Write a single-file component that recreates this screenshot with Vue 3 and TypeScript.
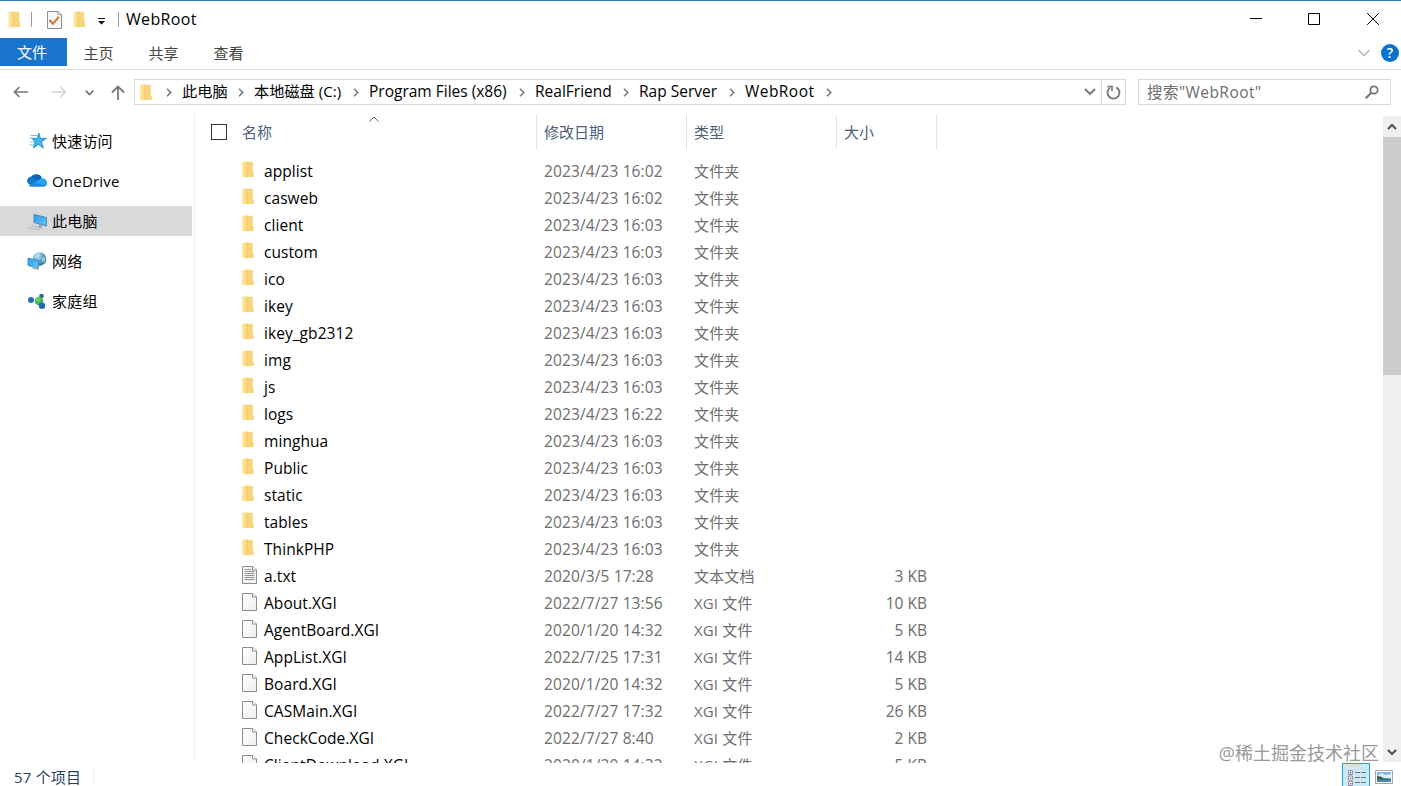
<script setup lang="ts">
interface Entry {
  name: string
  date: string
  kind: 'folder' | 'text' | 'file'
  size: string
}

const folderTimes: [string, string][] = [
  ['applist', '16:02'],
  ['casweb', '16:02'],
  ['client', '16:03'],
  ['custom', '16:03'],
  ['ico', '16:03'],
  ['ikey', '16:03'],
  ['ikey_gb2312', '16:03'],
  ['img', '16:03'],
  ['js', '16:03'],
  ['logs', '16:22'],
  ['minghua', '16:03'],
  ['Public', '16:03'],
  ['static', '16:03'],
  ['tables', '16:03'],
  ['ThinkPHP', '16:03'],
]

const entries: Entry[] = [
  ...folderTimes.map(([name, time]): Entry => ({ name, date: `2023/4/23 ${time}`, kind: 'folder', size: '' })),
  { name: 'a.txt', date: '2020/3/5 17:28', kind: 'text', size: '3 KB' },
  { name: 'About.XGI', date: '2022/7/27 13:56', kind: 'file', size: '10 KB' },
  { name: 'AgentBoard.XGI', date: '2020/1/20 14:32', kind: 'file', size: '5 KB' },
  { name: 'AppList.XGI', date: '2022/7/25 17:31', kind: 'file', size: '14 KB' },
  { name: 'Board.XGI', date: '2020/1/20 14:32', kind: 'file', size: '5 KB' },
  { name: 'CASMain.XGI', date: '2022/7/27 17:32', kind: 'file', size: '26 KB' },
  { name: 'CheckCode.XGI', date: '2022/7/27 8:40', kind: 'file', size: '2 KB' },
  { name: 'ClientDownload.XGI', date: '2020/1/20 14:32', kind: 'file', size: '5 KB' },
]

const kindLabels: Record<Entry['kind'], string> = {
  folder: '文件夹',
  text: '文本文档',
  file: 'XGI 文件',
}

const crumbs = [
  { label: '此电脑', width: 47 },
  { label: '本地磁盘 (C:)', width: 90 },
  { label: 'Program Files (x86)', width: 141 },
  { label: 'RealFriend', width: 79 },
  { label: 'Rap Server', width: 81 },
  { label: 'WebRoot', width: 72 },
]

const places = [
  { label: '快速访问', icon: 'star' },
  { label: 'OneDrive', icon: 'cloud' },
  { label: '此电脑', icon: 'pc' },
  { label: '网络', icon: 'network' },
  { label: '家庭组', icon: 'group' },
]
</script>

<template>
  <div class="window">
    <svg class="defs" width="0" height="0">
      <defs>
        <linearGradient id="fold" x1="0" x2="1" y1="0" y2="0">
          <stop offset="0" stop-color="#ffe8a3" />
          <stop offset="1" stop-color="#fbd575" />
        </linearGradient>
        <linearGradient id="screen" x1="0" x2="1" y1="0" y2="1">
          <stop offset="0" stop-color="#2f9eea" />
          <stop offset="1" stop-color="#62c5fa" />
        </linearGradient>
        <linearGradient id="page" x1="0" x2="1" y1="0" y2="1">
          <stop offset="0" stop-color="#ffffff" />
          <stop offset="1" stop-color="#eeeeee" />
        </linearGradient>
        <radialGradient id="globe" cx=".35" cy=".3" r=".75">
          <stop offset="0" stop-color="#c5e5f2" />
          <stop offset=".55" stop-color="#5ba3c6" />
          <stop offset="1" stop-color="#28709a" />
        </radialGradient>
        <symbol id="folder" viewBox="0 0 12 17">
          <path d="M4 .7h6.8v10.6l1 .8v4H4z" fill="#f7d57c" />
          <path d="M0 1 5.5.3v16.2L0 15.7z" fill="url(#fold)" />
          <path d="M4.400 1h1.100v15H4.400z" fill="#efc45f" opacity=".5" />
        </symbol>
      </defs>
    </svg>

    <header class="titlebar">
      <div class="quick">
        <svg class="folder-q" width="13" height="17"><use href="#folder" /></svg>
        <i class="sep"></i>
        <svg class="check" width="15" height="18" viewBox="0 0 15 18">
          <path d="M.5.5h11l3 3v14H.5z" fill="#f7f8f9" stroke="#8e8e8e" />
          <path d="M11 .5v3.2h3.5" fill="#fff" stroke="#9b9b9b" />
          <path d="m2.5 9 3.4 3.8 6-7" fill="none" stroke="#e06a2c" stroke-width="2" />
        </svg>
        <svg class="folder-q2" width="13" height="17"><use href="#folder" /></svg>
        <svg class="drop" width="7" height="7" viewBox="0 0 7 7"><path d="M0 0h7v1H0zM0 3h7L3.5 6.5z" fill="#111" /></svg>
        <i class="sep last"></i>
        <span class="title">WebRoot</span>
      </div>
      <div class="controls">
        <svg class="min" width="12" height="12" viewBox="0 0 12 12"><path d="M0 5.500h12" stroke="#000" /></svg>
        <svg width="12" height="12" viewBox="0 0 12 12"><path d="M.5.5h11v11H.5z" fill="none" stroke="#000" /></svg>
        <svg width="12" height="12" viewBox="0 0 12 12"><path d="m.2.2 11.6 11.6m0-11.6L.2 11.8" stroke="#000" /></svg>
      </div>
    </header>

    <nav class="ribbon">
      <span class="tab file">文件</span>
      <span class="tab">主页</span>
      <span class="tab">共享</span>
      <span class="tab">查看</span>
      <div class="ribbon-end">
        <svg width="12" height="8" viewBox="0 0 12 8"><path d="m.5 1 5.500 5.500L11.500 1" fill="none" stroke="#b4b4b4" stroke-width="1.400" /></svg>
        <span class="help">?</span>
      </div>
    </nav>

    <div class="address-row">
      <div class="history">
        <svg width="15" height="12" viewBox="0 0 15 12"><path d="M15 6H1.500M6.500 1l-5 5 5 5" fill="none" stroke="#777" stroke-width="1.700" /></svg>
        <svg width="15" height="12" viewBox="0 0 15 12"><path d="M0 6h13.500M8.500 1l5 5-5 5" fill="none" stroke="#d4d4d4" stroke-width="1.500" /></svg>
        <svg class="recent" width="9" height="6" viewBox="0 0 9 6"><path d="m.7.700 3.800 3.800L8.300.700" fill="none" stroke="#777" stroke-width="1.700" /></svg>
        <svg class="up" width="14" height="15" viewBox="0 0 14 15"><path d="M7 15V1.500M1 7.500l6-6 6 6" fill="none" stroke="#777" stroke-width="1.800" /></svg>
      </div>
      <div class="address">
        <svg class="folder-a" width="12" height="17"><use href="#folder" /></svg>
        <svg class="crumb-sep" width="6" height="9" viewBox="0 0 6 9"><path d="m1 .7 3.800 3.800L1 8.300" fill="none" stroke="#777" stroke-width="1.500" /></svg>
        <template v-for="crumb in crumbs" :key="crumb.label">
          <span class="crumb" :style="{ width: crumb.width + 'px' }">{{ crumb.label }}</span>
          <svg class="crumb-sep" width="6" height="9" viewBox="0 0 6 9"><path d="m1 .7 3.800 3.800L1 8.300" fill="none" stroke="#777" stroke-width="1.500" /></svg>
        </template>
        <div class="address-end">
          <svg width="12" height="8" viewBox="0 0 12 8"><path d="m1 1 5 5 5-5" fill="none" stroke="#777" stroke-width="1.900" /></svg>
          <div class="refresh">
            <svg width="15" height="15" viewBox="0 0 15 15">
              <path d="M10.300 2.300a6 6 0 1 1-6.300.4" fill="none" stroke="#777" stroke-width="1.900" />
              <path d="M1.500 1.500h4.500v4.500" fill="none" stroke="#777" stroke-width="1.700" />
            </svg>
          </div>
        </div>
      </div>
      <div class="search">
        <span>搜索"WebRoot"</span>
        <svg width="14" height="14" viewBox="0 0 14 14"><circle cx="9" cy="5" r="3.700" fill="none" stroke="#777" stroke-width="1.800" /><path d="M6.300 7.700.8 13.200" stroke="#777" stroke-width="2.200" /></svg>
      </div>
    </div>

    <main class="body">
      <aside class="places">
        <div v-for="place in places" :key="place.icon" class="place" :class="{ active: place.icon === 'pc' }">
          <svg width="22" height="20" viewBox="0 0 22 20">
            <g v-if="place.icon === 'star'">
              <path d="m12.800 2 1.600 5.500 6-.2-4.900 3.700 1.900 6-5-3.500-5 3.500 1.600-5.800-3-3.800 5 .1z" fill="#43b3ee" stroke="#1682c5" stroke-width=".8" />
              <path d="M4.500 4.500H11M3.500 7h5M4.500 11h4M3.500 14h4" stroke="#75c3ea" />
            </g>
            <g v-else-if="place.icon === 'cloud'">
              <path d="M4 8a6.500 6.500 0 0 1 12-1.200L9 13z" fill="#0865b7" />
              <path d="M6 14a4.200 4.200 0 1 1 2.300-7.100L15 11v4H5z" fill="#1476ca" />
              <path d="M3 14.500 14.500 8a4 4 0 0 1 6 2c1.500 3 0 5.500-2.700 5.500H5z" fill="#28a2ea" />
              <path d="m8.500 11.500 11 3.300q-1 .7-2 .7H5q-1.300 0-2.300-.8z" fill="#1688dc" />
            </g>
            <g v-else-if="place.icon === 'pc'">
              <path d="m8 3.500 12.500 3V15L8 11.500z" fill="url(#screen)" stroke="#377cac" stroke-width=".8" />
              <path d="m2 16.500 6 1.500 6 .5M5 14.500l12 3" fill="none" stroke="#aeb9c1" />
              <path d="m13 14 3 .8-.5 1.700-3-1z" fill="#8097a6" />
            </g>
            <g v-else-if="place.icon === 'network'">
              <circle cx="13.500" cy="8" r="6.800" fill="url(#globe)" />
              <path d="M9 4.500q3-3.500 6-2l-2 3-3 2zM16 7l3-1 .5 4-3 2z" fill="#b8dcea" opacity=".7" />
              <path d="m2 7 10.500 2.500v8L2 14.500z" fill="url(#screen)" stroke="#2c7db3" stroke-width=".7" />
              <path d="m6 17 6 1.500" stroke="#9daab4" />
            </g>
            <g v-else>
              <circle cx="5" cy="9" r="3" fill="#2070b4" />
              <circle cx="15.500" cy="5" r="2.300" fill="#286e94" />
              <circle cx="13" cy="10" r="4.300" fill="#42b64c" />
              <circle cx="12" cy="8.500" r="2.200" fill="#72cd67" />
              <circle cx="16" cy="14.800" r="3.200" fill="#1b6cb4" />
            </g>
          </svg>
          <span>{{ place.label }}</span>
        </div>
      </aside>

      <section class="files">
        <svg class="sort" width="10" height="6" viewBox="0 0 10 6"><path d="m.5 5.500 4.500-4.500 4.500 4.500" fill="none" stroke="#666" /></svg>
        <div class="head">
          <div class="h-name"><i class="box"></i>名称</div>
          <div>修改日期</div>
          <div>类型</div>
          <div>大小</div>
        </div>
        <div class="rows">
          <div v-for="entry in entries" :key="entry.name" class="row">
            <div class="icon">
              <svg v-if="entry.kind === 'folder'" width="12" height="17"><use href="#folder" /></svg>
              <svg v-else width="15" height="18" viewBox="0 0 15 18">
                <path d="M.5.5h10.500l3.500 3.500v13.500H.5z" fill="url(#page)" stroke="#8d8d8d" />
                <path d="M10.500.5v3.500h4" fill="#fff" stroke="#8d8d8d" />
                <path v-if="entry.kind === 'text'" d="M2.500 3.500H9M2.500 5.500h10M2.500 7.500h10M2.500 9.500h10M2.500 11.500h10M2.500 13.500h10" stroke="#929292" />
              </svg>
            </div>
            <div class="name">{{ entry.name }}</div>
            <div class="date">{{ entry.date }}</div>
            <div class="kind">{{ kindLabels[entry.kind] }}</div>
            <div class="size">{{ entry.size }}</div>
          </div>
        </div>
      </section>

      <div class="scrollbar">
        <svg width="10" height="7" viewBox="0 0 10 7"><path d="m1 6 4-4 4 4" fill="none" stroke="#505050" stroke-width="2" /></svg>
        <div class="thumb"></div>
        <svg class="down" width="10" height="7" viewBox="0 0 10 7"><path d="m1 1 4 4 4-4" fill="none" stroke="#505050" stroke-width="2" /></svg>
      </div>
    </main>

    <footer class="status">
      <span class="count">57 个项目</span>
      <i></i>
      <div class="views">
        <div class="details">
          <svg width="20" height="17" viewBox="0 0 20 17">
            <path d="M1.500.5h4v4h-4zM1.500 6h4v4h-4zM1.500 11.500h4v4h-4z" fill="#fff" stroke="#9a8f9e" />
            <path d="M2.800 2h1.500v1.500H2.800z" fill="#3c62aa" /><path d="M2.800 7.300h1.500v1.500H2.800z" fill="#6c8a32" /><path d="M2.800 13h1.500v1.500H2.800z" fill="#b63a3a" />
            <path d="M8 2.500h5m1 0h5M8 7.500h5m1 0h5M8 12.500h5m1 0h5" stroke="#66757d" />
          </svg>
        </div>
        <svg class="thumbs" width="18" height="14" viewBox="0 0 18 14">
          <path d="M.5.5h17v13H.5z" fill="#fff" stroke="#a4a4a4" />
          <path d="M2 2h14v10H2z" fill="#75b9ed" />
          <path d="M2 6.500q3-4 5.500-3l3 1.500 5.500-1v4L6 8z" fill="#dceffc" />
          <path d="M2 6q4 0 7 2.300l7 .7v1H2z" fill="#34664f" />
          <path d="M2 9.500h14V12H2z" fill="#4a86ad" />
        </svg>
      </div>
    </footer>

    <div class="watermark">@稀土掘金技术社区</div>
  </div>
</template>

<style>
body {
  margin: 0;
  overflow: hidden;
}
</style>

<style scoped>
.window {
  position: relative;
  display: flex;
  flex-direction: column;
  box-sizing: border-box;
  width: 1401px;
  height: 786px;
  overflow: hidden;
  border-top: 1px solid #2a7ab5;
  background: #fff;
  color: #000;
  font: 15px/20px 'Open Sans', 'Noto Sans CJK SC', sans-serif;
  white-space: nowrap;
}
svg { display: block; flex: none; }
.defs { position: absolute; }
.titlebar { display: flex; justify-content: space-between; height: 37px; }
.quick { display: flex; align-items: center; height: 37px; padding-left: 8px; }
.sep { width: 1px; height: 15px; margin-left: 10px; background: #999; }
.check { margin-left: 15px; }
.folder-q2 { margin-left: 11px; }
.drop { margin: 3px 0 0 12px; }
.sep.last { margin-left: 13px; }
.title { margin: 0 0 2px 7px; font-size: 16px; letter-spacing: .35px; }
.controls { display: flex; gap: 47px; padding: 12px 22px 0 0; }
.controls .min { margin-right: -1px; }
.ribbon { display: flex; height: 31px; border-bottom: 1px solid #dadbdc; color: #444; }
.tab { width: 65px; height: 28px; line-height: 30px; text-align: center; }
.tab.file { box-sizing: border-box; width: 67px; margin-right: -1px; padding-right: 3px; background: #1874cd; color: #fff; line-height: 29px; }
.ribbon-end { display: flex; align-items: center; gap: 11px; height: 30px; margin-left: auto; padding-right: 2px; }
.help { width: 18px; height: 18px; border-radius: 50%; background: #0873cf; color: #fff; font-size: 14px; font-weight: 600; line-height: 18px; text-align: center; }
.address-row { display: flex; height: 44px; padding-top: 9px; box-sizing: border-box; }
.history { display: flex; align-items: center; width: 121px; height: 26px; padding-left: 13px; }
.history svg:nth-child(2) { margin-left: 24px; }
.history .recent { margin-left: 18px; margin-top: 2px; }
.history .up { margin-left: 17px; }
.address { display: flex; align-items: center; box-sizing: border-box; width: 992px; height: 26px; border: 1px solid #d9d9d9; }
.folder-a { margin: 0 14px 0 5px; }
.crumb { margin: 0 9px 2px 10px; font-size: 15.500px; }
.crumb:nth-of-type(1), .crumb:nth-of-type(2) { font-size: 15.200px; }
.crumb:nth-of-type(6) { letter-spacing: .45px; }
.address-end { display: flex; align-items: center; height: 24px; margin-left: auto; }
.refresh { display: grid; place-items: center; width: 23px; height: 24px; margin-left: 5px; border-left: 1px solid #d9d9d9; }
.search { display: flex; align-items: center; justify-content: space-between; box-sizing: border-box; width: 253px; height: 26px; margin-left: 12px; padding: 0 11px 0 8px; border: 1px solid #d9d9d9; color: #6d6d6d; font-size: 15.500px; letter-spacing: .45px; }
.body { display: flex; height: 649px; }
.places { box-sizing: border-box; width: 195px; height: 646px; padding-top: 12px; border-right: 1px solid #f0f0f0; }
.place { display: flex; align-items: center; width: 192px; height: 30px; margin-bottom: 10px; padding-left: 26px; box-sizing: border-box; }
.place span { margin-left: 4px; letter-spacing: .2px; }
.active { background: #d9d9d9; }
.files { position: relative; width: 1188px; height: 649px; overflow: hidden; }
.sort { position: absolute; left: 174px; top: 2px; }
.head { display: grid; grid-template-columns: 342px 150px 150px 100px; height: 36px; color: #4c607a; line-height: 36px; }
.head div { box-sizing: border-box; border-right: 1px solid #e5e5e5; padding-left: 7px; }
.head .h-name { display: flex; align-items: center; padding-left: 16px; }
.box { width: 14px; height: 14px; margin-right: 15px; border: 1px solid #333; background: #fff; }
.rows { padding-top: 8px; }
.row { display: grid; grid-template-columns: 22px 280px 150px 150px 83px; height: 27px; padding-left: 47px; color: #6d6d6d; line-height: 26px; }
.icon { padding-top: 3px; }
.name { color: #000; font-size: 15.500px; letter-spacing: .06px; }
.date { font-size: 15.500px; letter-spacing: .12px; }
.kind { letter-spacing: .15px; }
.size { font-size: 15.500px; text-align: right; }
.scrollbar { display: flex; flex-direction: column; align-items: center; width: 18px; height: 646px; margin-top: 2px; background: #f0f0f0; }
.scrollbar > svg { margin-top: 7px; }
.thumb { width: 18px; height: 238px; margin-top: 7px; background: #cdcdcd; }
.scrollbar .down { margin: auto 0 6px; }
.status { display: flex; height: 23px; color: #26405f; }
.count { margin: 4px 0 0 14px; letter-spacing: .2px; }
.status i { width: 1px; height: 14px; margin: 6px 0 0 12px; background: #eee; }
.views { display: flex; margin-left: auto; }
.details { box-sizing: border-box; width: 28px; height: 26px; padding: 6px 0 0 4px; border: 1px solid #26a0da; background: #cce8f5; }
.thumbs { margin: 7px 8px 0 5px; }
.watermark { position: absolute; right: 22px; top: 740px; color: #999; font-size: 18px; line-height: 24px; text-shadow: 1px 1px 1px #fff; }
</style>
